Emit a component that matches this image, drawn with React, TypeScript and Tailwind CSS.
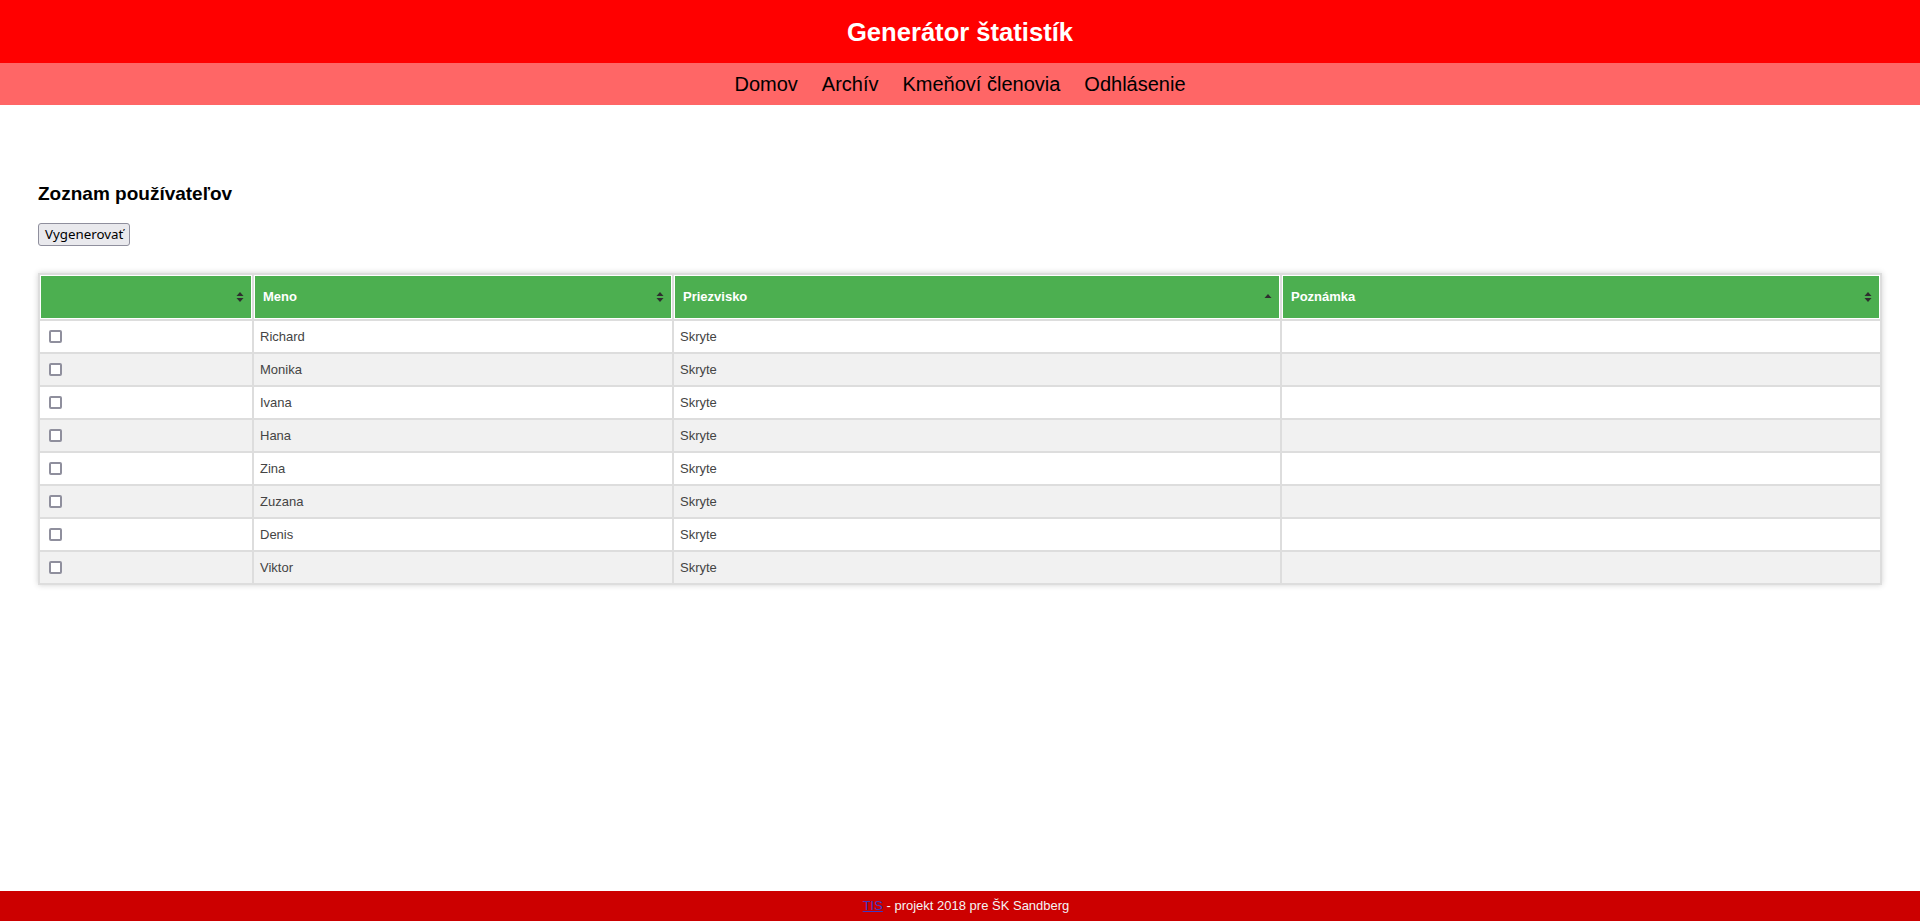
import React from "react";

const USERS = ["Richard", "Monika", "Ivana", "Hana", "Zina", "Zuzana", "Denis", "Viktor"];

const NAV = ["Domov", "Archív", "Kmeňoví členovia", "Odhlásenie"];

function SortBoth() {
  return (
    <svg width="8" height="10" viewBox="0 0 8 10" className="shrink-0">
      <path d="M4 0 L7.5 4 L0.5 4 Z" fill="#2f2f2f" />
      <path d="M4 10 L7.5 6 L0.5 6 Z" fill="#2f2f2f" />
    </svg>
  );
}

function SortAsc() {
  return (
    <svg width="8" height="10" viewBox="0 0 8 10" className="shrink-0">
      <path d="M4 2 L7.5 6 L0.5 6 Z" fill="#2f2f2f" />
    </svg>
  );
}

function HeaderCell({
  label,
  sort,
  width,
}: {
  label?: string;
  sort: "both" | "asc";
  width?: string;
}) {
  return (
    <th
      className={[
        "h-[44px] border border-white bg-[#4caf50] p-0 text-left align-middle",
        width ?? "",
      ].join(" ")}
    >
      <div className="flex items-center justify-between pl-[8px] pr-[7px]">
        <span className="text-[13px] font-bold text-white">{label ?? ""}</span>
        {sort === "both" ? <SortBoth /> : <SortAsc />}
      </div>
    </th>
  );
}

export default function App() {
  return (
    <div
      className="flex min-h-screen flex-col bg-white"
      style={{ fontFamily: '"Liberation Sans", Arial, sans-serif' }}
    >
      <header className="flex h-[63px] items-center justify-center bg-[#ff0000]">
        <h2 className="pt-[2px] text-[25.6px] font-bold leading-none text-white">Generátor štatistík</h2>
      </header>

      <nav className="flex h-[42px] items-center justify-center gap-[24px] bg-[#ff6666]">
        {NAV.map((item) => (
          <a key={item} className="text-[20px] leading-none text-black">
            {item}
          </a>
        ))}
      </nav>

      <main className="flex-1 px-[38px] pt-[78px]">
        <h3 className="text-[19px] font-bold leading-[22px] text-black">Zoznam používateľov</h3>

        <button
          className="mt-[18px] h-[23px] rounded-[3px] border border-[#8f8f9d] bg-[#e9e9ed] px-[6px] text-[13.33px] leading-none text-black"
          style={{ fontFamily: '"Noto Sans", sans-serif' }}
        >
          Vygenerovať
        </button>

        <div className="mt-[27px] shadow-[0_0_6px_rgba(0,0,0,0.18)]">
          <table className="w-full table-fixed border-separate border-spacing-[2px] bg-[#dddddd]">
            <thead>
              <tr>
                <HeaderCell sort="both" width="w-[212px]" />
                <HeaderCell label="Meno" sort="both" width="w-[418px]" />
                <HeaderCell label="Priezvisko" sort="asc" width="w-[606px]" />
                <HeaderCell label="Poznámka" sort="both" />
              </tr>
            </thead>
            <tbody>
              {USERS.map((name, i) => {
                const bg = i % 2 === 0 ? "bg-white" : "bg-[#f1f1f1]";
                return (
                  <tr key={name}>
                    <td className={`h-[31px] pl-[9px] align-middle ${bg}`}>
                      <input
                        type="checkbox"
                        className="m-0 block h-[13px] w-[13px] appearance-none rounded-[2px] border-2 border-[#8f8f9d] bg-white"
                      />
                    </td>
                    <td className={`h-[31px] px-[6px] align-middle text-[13px] text-[#444] ${bg}`}>{name}</td>
                    <td className={`h-[31px] px-[6px] align-middle text-[13px] text-[#444] ${bg}`}>Skryte</td>
                    <td className={`h-[31px] px-[6px] ${bg}`}></td>
                  </tr>
                );
              })}
            </tbody>
          </table>
        </div>
      </main>

      <footer className="flex h-[30px] items-center justify-center bg-[#cc0000] pl-[12px] text-[13px] text-[#f4f4f4]">
        <a className="text-[#3b3bc4] underline">TIS</a>
        <span>&nbsp;- projekt 2018 pre ŠK Sandberg</span>
      </footer>
    </div>
  );
}
